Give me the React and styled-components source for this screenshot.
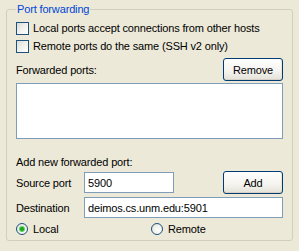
import React, { useState } from "react";
import styled, { createGlobalStyle } from "styled-components";

const GlobalStyle = createGlobalStyle`
  html, body {
    margin: 0;
    padding: 0;
    background: #ece9d8;
  }
  body {
    font-family: "Liberation Sans", Arial, sans-serif;
    font-size: 11px;
    letter-spacing: -0.15px;
    color: #000;
  }
`;

const Page = styled.div`
  width: 299px;
  height: 251px;
  padding: 3px 0 0 6px;
  box-sizing: border-box;
`;

const Group = styled.fieldset`
  margin: 0;
  width: 287px;
  height: 238px;
  box-sizing: border-box;
  border: 1px solid #d0d0bf;
  border-radius: 3px;
  padding: 3px 9px 0 9px;
  display: flex;
  flex-direction: column;
`;

const Legend = styled.legend`
  color: #0046d5;
  padding: 0 1px;
  margin-left: 0;
  line-height: 13px;
`;

const CheckRow = styled.label`
  display: flex;
  align-items: center;
  gap: 4px;
  height: 18px;
`;

const CheckBox = styled.span`
  width: 13px;
  height: 13px;
  box-sizing: border-box;
  border: 1px solid #1c5180;
  background: linear-gradient(135deg, #dcdcd7 0%, #f4f4f0 60%, #ffffff 100%);
`;

const SplitRow = styled.div`
  display: flex;
  align-items: center;
  justify-content: space-between;
  margin-top: ${(p) => p.$top || 0}px;
`;

const Button = styled.button`
  width: 60px;
  height: 23px;
  padding: 0;
  font: inherit;
  letter-spacing: inherit;
  color: #000;
  border: 1px solid #003c74;
  border-radius: 3px;
  background: linear-gradient(#ffffff 0%, #f4f3ee 60%, #e3e1d7 100%);
  box-shadow: inset 0 -1px 0 #d6d0c5, inset -1px 0 0 #e8e5da;
`;

const ListBox = styled.div`
  margin-top: 2px;
  height: 56px;
  box-sizing: border-box;
  border: 1px solid #7f9db9;
  background: #fff;
`;

const Caption = styled.div`
  margin-top: ${(p) => p.$top || 0}px;
  line-height: 13px;
`;

const FieldRow = styled.div`
  display: grid;
  grid-template-columns: 68px ${(p) => p.$input}px 1fr;
  align-items: center;
  margin-top: ${(p) => p.$top || 0}px;
  & > button {
    justify-self: end;
  }
`;

const TextInput = styled.input`
  height: 21px;
  box-sizing: border-box;
  border: 1px solid #7f9db9;
  padding: 0 3px;
  font: inherit;
  letter-spacing: inherit;
  color: #000;
  background: #fff;
  outline: none;
  grid-column: ${(p) => (p.$wide ? "2 / 4" : "auto")};
`;

const RadioRow = styled.div`
  display: flex;
  align-items: center;
  margin-top: 4px;
  height: 13px;
`;

const RadioLabel = styled.label`
  display: flex;
  align-items: center;
  gap: 5px;
  width: ${(p) => p.$width || "auto"};
`;

const RadioDot = styled.span`
  width: 12px;
  height: 12px;
  box-sizing: border-box;
  border-radius: 50%;
  border: 1px solid #1c5180;
  background: radial-gradient(circle at 60% 60%, #ffffff 0%, #f0f0ea 55%, #d5d4cc 100%);
  display: flex;
  align-items: center;
  justify-content: center;
  &::after {
    content: "";
    width: 4px;
    height: 4px;
    border-radius: 50%;
    background: ${(p) => (p.$on ? "#21a121" : "transparent")};
    box-shadow: ${(p) => (p.$on ? "0 0 0 1px #5fcf5f" : "none")};
  }
`;

export default function App() {
  const [local, setLocal] = useState(true);
  return (
    <>
      <GlobalStyle />
      <Page>
        <Group>
          <Legend>Port forwarding</Legend>
          <CheckRow>
            <CheckBox />
            Local ports accept connections from other hosts
          </CheckRow>
          <CheckRow>
            <CheckBox />
            Remote ports do the same (SSH v2 only)
          </CheckRow>
          <SplitRow $top={3}>
            <span>Forwarded ports:</span>
            <Button>Remove</Button>
          </SplitRow>
          <ListBox />
          <Caption $top={17}>Add new forwarded port:</Caption>
          <FieldRow $input={90} $top={2}>
            <span>Source port</span>
            <TextInput defaultValue="5900" />
            <Button>Add</Button>
          </FieldRow>
          <FieldRow $input={90} $top={3}>
            <span>Destination</span>
            <TextInput $wide defaultValue="deimos.cs.unm.edu:5901" />
          </FieldRow>
          <RadioRow>
            <RadioLabel $width="135px" onClick={() => setLocal(true)}>
              <RadioDot $on={local} />
              Local
            </RadioLabel>
            <RadioLabel onClick={() => setLocal(false)}>
              <RadioDot $on={!local} />
              Remote
            </RadioLabel>
          </RadioRow>
        </Group>
      </Page>
    </>
  );
}
